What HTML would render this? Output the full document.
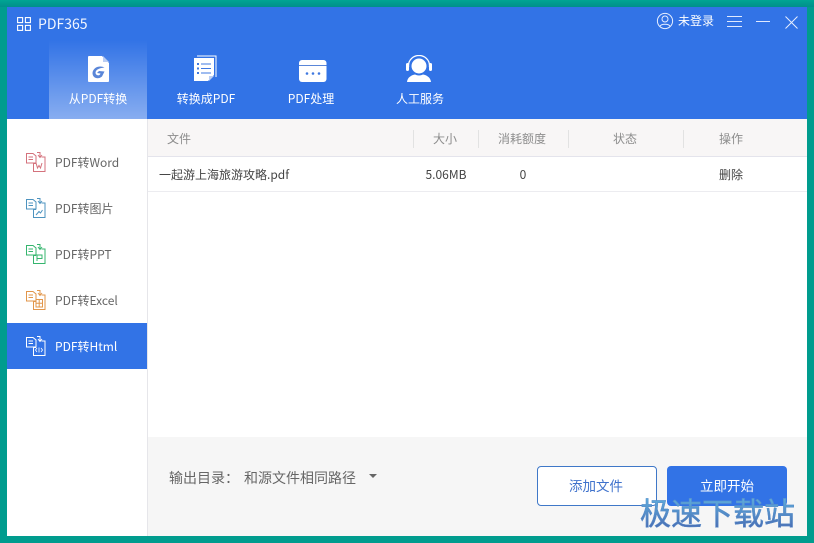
<!DOCTYPE html>
<html lang="zh">
<head>
<meta charset="utf-8">
<title>PDF365</title>
<style>
html,body{margin:0;padding:0}
body{width:814px;height:543px;overflow:hidden;position:relative;background:#009c8e;font-family:"Noto Sans CJK SC","Liberation Sans",sans-serif}
div,span,svg{position:absolute}
.t{white-space:nowrap;line-height:1}
.c{text-align:center;transform:translateX(-50%)}
.nav{color:#fff;font-size:12px;top:93px}
.side{font-size:12px;color:#666;left:55px}
.th{font-size:12px;color:#8d8d8d;top:133px}
.sep{width:1px;height:18px;top:130px;background:#e2e2e2}
.td{font-size:12px;color:#444;top:169px}
</style>
</head>
<body>
<div style="left:0;top:0;width:814px;height:7px;background:linear-gradient(#00a593,#008f8a)"></div>
<div id="win" style="left:7px;top:7px;width:800px;height:529px;background:#fff;overflow:hidden"></div>

<!-- header -->
<div style="left:7px;top:7px;width:800px;height:112px;background:#3273e6"></div>
<div style="left:49px;top:40px;width:98px;height:79px;background:linear-gradient(rgba(255,255,255,0),rgba(255,255,255,.42))"></div>

<svg style="left:17px;top:17px" width="14" height="14" viewBox="0 0 14 14" fill="none" stroke="#fff" stroke-width="1.100"><rect x=".6" y=".6" width="5" height="5"/><rect x="8.400" y=".6" width="5" height="5"/><rect x=".6" y="8.400" width="5" height="5"/><rect x="8.400" y="8.400" width="5" height="5"/></svg>
<div class="t" style="left:38px;top:17px;color:#f2f6ff;font-size:14px">PDF365</div>

<!-- nav icons -->
<svg style="left:87px;top:56px" width="23" height="27" viewBox="0 0 23 27"><path d="M1 1Q1 0 2 0H15L22 7V25Q22 26 21 26H2Q1 26 1 25Z" fill="#fff"/><path d="M16 0L22 6H16Z" fill="#b9cdf3"/><path d="M17.500 11.500C13 9 6 11 5.500 17C5.500 22 11 24 15 20.500L17.500 15.500L12 15L10 17L13.500 17.500C13 20 9 20 8.500 17C8.500 13 13.500 12 17.500 11.500Z" fill="#5a86d8"/></svg>
<svg style="left:193px;top:55px" width="24" height="27" viewBox="0 0 24 27"><path d="M4 1H23V22" fill="none" stroke="#fff" stroke-width="1"/><path d="M1 3H21V20L15 26H1Z" fill="#fff"/><path d="M16 26V21H21Z" fill="#b9cdf3"/><g fill="#3f78e0"><rect x="4" y="8" width="2" height="2"/><rect x="4" y="12.500" width="2" height="2"/><rect x="4" y="17" width="2" height="2"/><rect x="8" y="8.500" width="10" height="1"/><rect x="8" y="13" width="10" height="1"/><rect x="8" y="17.500" width="10" height="1"/></g></svg>
<svg style="left:299px;top:60px" width="28" height="22" viewBox="0 0 28 22"><rect width="27.500" height="22" rx="3" fill="#fff"/><rect y="5" width="27.500" height="1" fill="#5a86d8"/><g fill="#3f78e0"><circle cx="8" cy="13.500" r="1.300"/><circle cx="14" cy="13.500" r="1.300"/><circle cx="20" cy="13.500" r="1.300"/></g></svg>
<svg style="left:405px;top:55px" width="28" height="27" viewBox="0 0 28 27"><path d="M3.500 12V10.500A10.500 10 0 0 1 24.500 10.500V12" fill="none" stroke="#fff" stroke-width="1.300"/><rect x="1" y="8" width="3" height="8" rx="1.500" fill="#fff"/><rect x="24" y="8" width="3" height="8" rx="1.500" fill="#fff"/><circle cx="14" cy="11" r="7.500" fill="#fff"/><path d="M2 27C2.500 22 7 20 10 19.500Q14 21.500 18 19.500C21 20 25.500 22 26 27Z" fill="#fff"/></svg>

<div class="t c nav" style="left:98px">从PDF转换</div>
<div class="t c nav" style="left:206px">转换成PDF</div>
<div class="t c nav" style="left:311px">PDF处理</div>
<div class="t c nav" style="left:420px">人工服务</div>

<!-- top right -->
<svg style="left:656px;top:12px" width="18" height="18" viewBox="0 0 18 18" fill="none" stroke="#e6eeff" stroke-width="1"><circle cx="9" cy="9" r="7.600"/><circle cx="9" cy="7" r="3"/><path d="M3.800 14.500C5 11.500 13 11.500 14.200 14.500"/></svg>
<div class="t" style="left:678px;top:15px;color:#fff;font-size:12px">未登录</div>
<svg style="left:727px;top:15px" width="44" height="13" viewBox="0 0 44 13" stroke="#dfe9ff" stroke-width="1" fill="none"><path d="M0 1.500H15M0 6.500H15M0 11.500H15M29 6.500H43"/></svg>
<svg style="left:785px;top:16px" width="13" height="13" viewBox="0 0 13 13" stroke="#e6eeff" stroke-width="1" fill="none"><path d="M.5.500L12.500 12.500M12.500.500L.5 12.500"/></svg>

<!-- sidebar -->
<div style="left:147px;top:119px;width:1px;height:417px;background:#e6e6ea"></div>
<div style="left:7px;top:323px;width:140px;height:46px;background:#3273e6"></div>

<svg style="left:26px;top:152px" width="20" height="20" viewBox="0 0 20 20" fill="none" stroke="#d4727c" stroke-width="1"><path d="M.5 1.500H7L10 4V11H.5ZM2.500 5H7M2.500 7.500H7M10 11.500H7.500V19.500H19V5H15.500M11 .5H14V5M12 3L14 5.500L16 3"/><path d="M10 11L11.500 16L13 13.500L14.500 16L16 11"/></svg>
<svg style="left:26px;top:198px" width="20" height="20" viewBox="0 0 20 20" fill="none" stroke="#4d93bf" stroke-width="1"><path d="M.5 1.500H7L10 4V11H.5ZM2.500 5H7M2.500 7.500H7M10 11.500H7.500V19.500H19V5H15.500M11 .5H14V5M12 3L14 5.500L16 3"/><path d="M10 17L13 13.500L14.500 15L16.500 12"/></svg>
<svg style="left:26px;top:244px" width="20" height="20" viewBox="0 0 20 20" fill="none" stroke="#35b56e" stroke-width="1"><path d="M.5 1.500H7L10 4V11H.5ZM2.500 5H7M2.500 7.500H7M10 11.500H7.500V19.500H19V5H15.500M11 .5H14V5M12 3L14 5.500L16 3"/><path d="M11 17V11H16V14.500H11"/></svg>
<svg style="left:26px;top:290px" width="20" height="20" viewBox="0 0 20 20" fill="none" stroke="#e2964a" stroke-width="1"><path d="M.5 1.500H7L10 4V11H.5ZM2.500 5H7M2.500 7.500H7M10 11.500H7.500V19.500H19V5H15.500M11 .5H14V5M12 3L14 5.500L16 3"/><path d="M10 9.500H16.500V17H10ZM10 13.200H16.500M13.200 9.500V17"/></svg>
<svg style="left:26px;top:336px" width="20" height="20" viewBox="0 0 20 20" fill="none" stroke="#fff" stroke-width="1"><path d="M.5 1.500H7L10 4V11H.5ZM2.500 5H7M2.500 7.500H7M10 11.500H7.500V19.500H19V5H15.500M11 .5H14V5M12 3L14 5.500L16 3"/><path d="M11 12L9.500 14L11 16M15 12L16.500 14L15 16M13 11.500V16.500" stroke-width=".8"/></svg>

<div class="t side" style="top:157px">PDF转Word</div>
<div class="t side" style="top:203px">PDF转图片</div>
<div class="t side" style="top:249px">PDF转PPT</div>
<div class="t side" style="top:295px">PDF转Excel</div>
<div class="t side" style="top:341px;color:#fff">PDF转Html</div>

<!-- table -->
<div style="left:148px;top:119px;width:659px;height:38px;background:#f8f6f6;border-bottom:1px solid #e4e4ec;box-sizing:border-box"></div>
<div class="t th" style="left:167px">文件</div>
<div class="t th c" style="left:445px">大小</div>
<div class="t th c" style="left:522px">消耗额度</div>
<div class="t th c" style="left:625px">状态</div>
<div class="t th c" style="left:731px">操作</div>
<div class="sep" style="left:413px"></div>
<div class="sep" style="left:478px"></div>
<div class="sep" style="left:568px"></div>
<div class="sep" style="left:683px"></div>

<div class="t td" style="left:159px">一起游上海旅游攻略.pdf</div>
<div class="t td c" style="left:446px">5.06MB</div>
<div class="t td c" style="left:523px">0</div>
<div class="t td c" style="left:731px">删除</div>
<div style="left:148px;top:191px;width:659px;height:1px;background:#ececf0"></div>

<!-- footer -->
<div style="left:148px;top:437px;width:659px;height:99px;background:#f6f6f6"></div>
<div class="t" style="left:169px;top:471px;font-size:14px;color:#666">输出目录：</div>
<div class="t" style="left:244px;top:471px;font-size:14px;color:#666">和源文件相同路径</div>
<div style="left:369px;top:474px;width:0;height:0;border-left:4px solid transparent;border-right:4px solid transparent;border-top:4px solid #666"></div>

<div style="left:537px;top:466px;width:120px;height:40px;box-sizing:border-box;border:1px solid #3f78c8;border-radius:4px;background:#fff"></div>
<div class="t c" style="left:596px;top:479px;font-size:13.500px;color:#3f72cc">添加文件</div>
<div style="left:667px;top:466px;width:120px;height:40px;border-radius:4px;background:#3273e6"></div>
<div class="t c" style="left:727px;top:479px;font-size:13.500px;color:#fff">立即开始</div>

<!-- watermark -->
<div class="t" style="left:640px;top:496px;font-size:31px;font-weight:400;-webkit-text-stroke:.5px #5a8cc8;background:linear-gradient(#5fb3e0,#4a6fb5);-webkit-background-clip:text;background-clip:text;color:transparent">极速下载站</div>
</body>
</html>
